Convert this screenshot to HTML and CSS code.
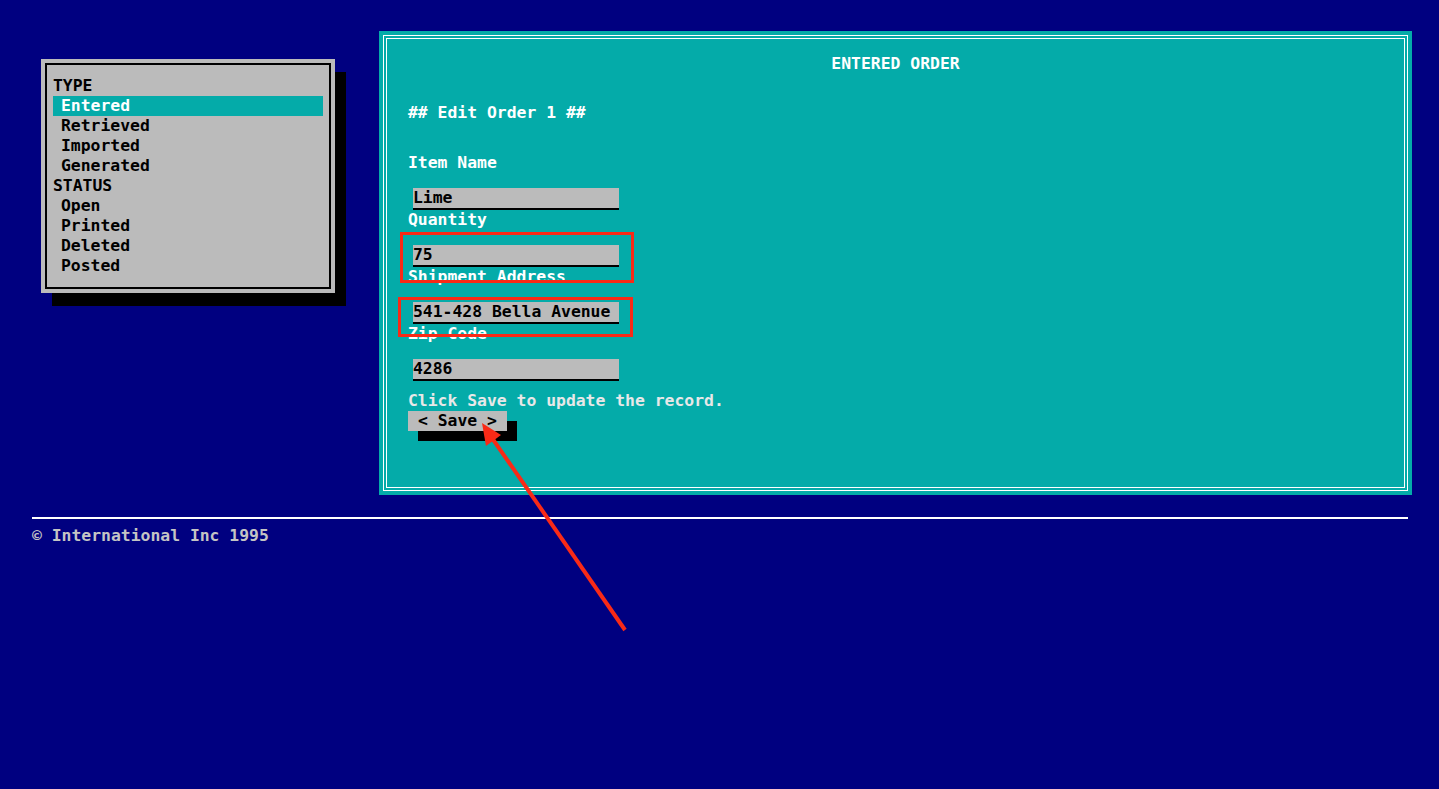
FILE: index.html
```html
<!DOCTYPE html>
<html lang="en">
<head>
<meta charset="utf-8">
<title>Entered Order</title>
<link rel="stylesheet" href="styles.css">
</head>
<body>
<div class="screen">
  <div class="top">
    <nav class="menu">
      <div class="menu-inner">
        <div class="group">TYPE</div>
        <div class="item active">Entered</div>
        <div class="item">Retrieved</div>
        <div class="item">Imported</div>
        <div class="item">Generated</div>
        <div class="group">STATUS</div>
        <div class="item">Open</div>
        <div class="item">Printed</div>
        <div class="item">Deleted</div>
        <div class="item">Posted</div>
      </div>
    </nav>
    <section class="panel">
      <div class="frame-outer">
        <div class="frame-inner">
          <h1 class="title">ENTERED ORDER</h1>
          <p class="heading">## Edit Order 1 ##</p>
          <div class="form">
            <div class="label first">Item Name</div>
            <div class="field f1">Lime</div>
            <div class="label">Quantity</div>
            <div class="field">75</div>
            <div class="label">Shipment Address</div>
            <div class="field">541-428 Bella Avenue</div>
            <div class="label">Zip Code</div>
            <div class="field">4286</div>
            <div class="hint">Click Save to update the record.</div>
            <div class="button">&lt; Save &gt;</div>
          </div>
        </div>
      </div>
    </section>
  </div>
  <div class="rule"></div>
  <p class="footer">© International Inc 1995</p>
</div>
<svg class="annotation" width="1439" height="789" viewBox="0 0 1439 789" xmlns="http://www.w3.org/2000/svg">
  <rect x="401.5" y="233.5" width="231" height="48" fill="none" stroke="#f92a17" stroke-width="3"/>
  <rect x="399.5" y="298.5" width="232" height="37" fill="none" stroke="#f92a17" stroke-width="3"/>
  <line x1="625" y1="630" x2="492" y2="438" stroke="#f92a17" stroke-width="4"/>
  <polygon points="482,423 486,446 501,435" fill="#f92a17"/>
</svg>
</body>
</html>
```
FILE: styles.css
```css
html, body {
  margin: 0;
  padding: 0;
  background: #000080;
}

body {
  width: 1439px;
  height: 789px;
  overflow: hidden;
  position: relative;
  font-family: "DejaVu Sans Mono", "Liberation Mono", monospace;
  font-weight: bold;
  font-size: 16.4px;
  line-height: 20px;
}

.screen {
  display: flex;
  flex-direction: column;
}

.top {
  display: flex;
  align-items: flex-start;
  gap: 44px;
  padding: 31px 0 0 41px;
}

/* Left menu */
.menu {
  margin-top: 28px;
  width: 294px;
  box-sizing: border-box;
  padding: 4px;
  background: #bbbbbb;
  box-shadow: 11px 13px 0 #000;
}

.menu-inner {
  border: 2px solid #000;
  padding: 11px 6px 11px 6px;
  color: #000;
}

.group {
  height: 20px;
}

.item {
  height: 20px;
  padding-left: 8px;
}

.item.active {
  background: #04aba9;
  color: #fff;
}

/* Main panel */
.panel {
  width: 1033px;
  height: 464px;
  box-sizing: border-box;
  padding: 4px;
  background: #04aba9;
}

.frame-outer {
  height: 100%;
  box-sizing: border-box;
  border: 1px solid #fff;
  padding: 2px;
}

.frame-inner {
  height: 100%;
  box-sizing: border-box;
  border: 1px solid #fff;
  padding: 0 0 0 21px;
  color: #fff;
}

.title {
  margin: 15px 0 0 -21px;
  font-size: inherit;
  font-weight: bold;
  line-height: 20px;
  text-align: center;
}

.heading {
  margin: 29px 0 0 0;
}

.form {
  display: flex;
  flex-direction: column;
  align-items: flex-start;
}

.label {
  height: 20px;
}

.label.first {
  margin-top: 30px;
}

.field {
  margin: 15px 0 0 5px;
  width: 206px;
  height: 20px;
  background: #bbbbbb;
  border-bottom: 2px solid #000;
  color: #000;
  white-space: nowrap;
}

.field.f1 {
  margin-top: 15px;
}

.hint {
  margin-top: 10px;
  color: #e8e8e8;
}

.button {
  margin-top: 0;
  width: 99px;
  height: 20px;
  box-sizing: border-box;
  padding-left: 10px;
  background: #bbbbbb;
  color: #000;
  box-shadow: 10px 10px 0 #000;
}

/* Footer */
.rule {
  margin: 22px 0 0 32px;
  width: 1376px;
  height: 2px;
  background: #fff;
}

.footer {
  margin: 7px 0 0 32px;
  color: #c4c4c4;
}

.annotation {
  position: absolute;
  left: 0;
  top: 0;
  pointer-events: none;
}
```
